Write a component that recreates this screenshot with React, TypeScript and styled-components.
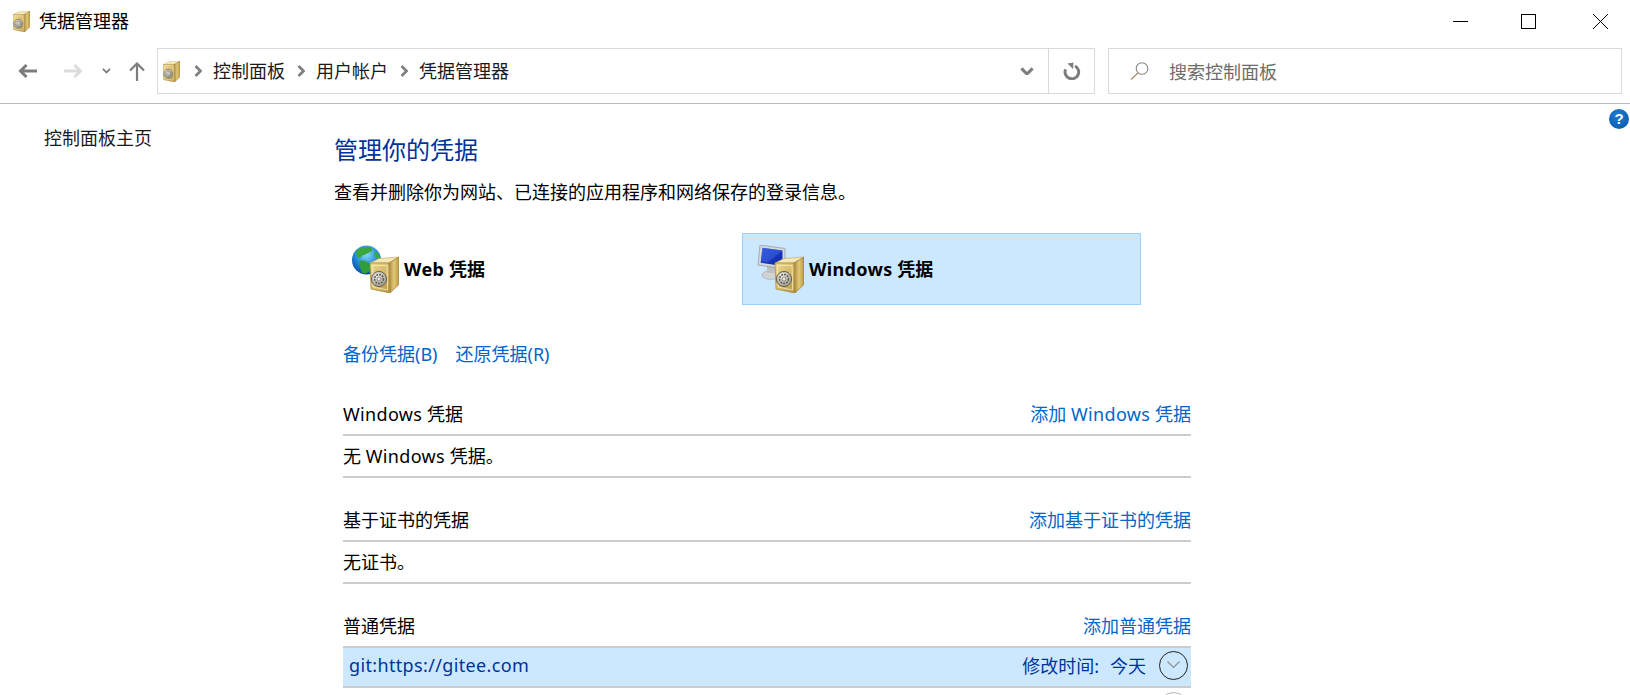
import styled, { createGlobalStyle } from "styled-components";

const GlobalStyle = createGlobalStyle`
  html, body {
    margin: 0;
    height: 695px;
    overflow: hidden;
    background: #fff;
  }
  body {
    font-family: "Noto Sans", "Noto Sans CJK SC", sans-serif;
    font-size: 18px;
    color: #000;
  }
`;

const Window = styled.div`
  width: 1630px;
  height: 695px;
  overflow: hidden;
  display: flex;
  flex-direction: column;
`;

const TitleBar = styled.header`
  height: 42px;
  flex: none;
  display: flex;
  align-items: center;
  gap: 9px;
  padding: 0 22px 0 13px;
`;

const TitleText = styled.span`
  flex: 1;
  line-height: 24px;
`;

const WindowControls = styled.div`
  display: flex;
  align-items: center;
  gap: 53px;
`;

const CloseSlot = styled.span`
  display: flex;
  margin-left: 4px;
`;

const Toolbar = styled.div`
  height: 62px;
  flex: none;
  box-sizing: border-box;
  display: flex;
  align-items: flex-start;
  padding: 6px 8px 0 18px;
  border-bottom: 1px solid #bcbcbc;
`;

const NavSlot = styled.span<{ $right: number }>`
  height: 46px;
  display: flex;
  align-items: center;
  margin-right: ${(p) => p.$right}px;
`;

const AddressBox = styled.div`
  width: 938px;
  height: 46px;
  box-sizing: border-box;
  flex: none;
  display: flex;
  align-items: center;
  border: 1px solid #d9d9d9;
  padding-left: 5px;
`;

const Crumbs = styled.div`
  flex: 1;
  display: flex;
  align-items: center;
  gap: 11px;
`;

const Crumb = styled.span`
  color: #1a1a1a;
  line-height: 24px;
  margin-right: 1px;
`;

const AddressHome = styled.span`
  display: flex;
  margin-right: 3px;
`;

const DropSlot = styled.span`
  display: flex;
  margin-right: 14px;
`;

const RefreshSlot = styled.span`
  width: 46px;
  height: 44px;
  box-sizing: border-box;
  border-left: 1px solid #d9d9d9;
  display: flex;
  align-items: center;
  justify-content: center;
`;

const SearchBox = styled.div`
  flex: none;
  width: 514px;
  height: 46px;
  box-sizing: border-box;
  margin-left: 13px;
  display: flex;
  align-items: center;
  gap: 20px;
  padding-left: 21px;
  border: 1px solid #d9d9d9;
  color: #6d6d6d;
`;

const Body = styled.div`
  flex: 1;
  display: flex;
  min-height: 0;
`;

const Sidebar = styled.nav`
  width: 334px;
  flex: none;
  box-sizing: border-box;
  padding: 22px 0 0 44px;
  line-height: 24px;
  color: #1a1a1a;
`;

const Main = styled.main`
  width: 857px;
  flex: none;
  padding-top: 30px;
`;

const HelpColumn = styled.aside`
  flex: 1;
  display: flex;
  justify-content: flex-end;
  align-items: flex-start;
  padding: 5px 1px 0 0;
`;

const HelpBadge = styled.span`
  width: 20px;
  height: 20px;
  border-radius: 50%;
  background: radial-gradient(circle at 40% 30%, #1f7ad2, #0557ac);
  box-sizing: border-box;
  color: #fff;
  font-family: "Liberation Sans", sans-serif;
  font-size: 15px;
  font-weight: 700;
  line-height: 20px;
  text-align: center;
`;

const Heading = styled.h1`
  margin: 0;
  font-size: 24px;
  font-weight: 400;
  line-height: 32px;
  color: #003399;
`;

const Description = styled.p`
  margin: 14px 0 0;
  line-height: 24px;
`;

const Tabs = styled.div`
  display: flex;
  gap: 6px;
  margin: 29px 0 0 3px;
`;

const Tab = styled.div<{ $active?: boolean }>`
  width: 399px;
  height: 72px;
  box-sizing: border-box;
  display: flex;
  align-items: center;
  gap: 5px;
  padding-left: 14px;
  font-weight: 700;
  border: 1px solid ${(p) => (p.$active ? "#99d1ff" : "transparent")};
  background: ${(p) => (p.$active ? "#cce8ff" : "transparent")};
`;

const TabLabel = styled.span`
  margin-bottom: 2px;
`;

const Links = styled.div`
  display: flex;
  gap: 18px;
  margin: 37px 0 27px 9px;
  line-height: 24px;
`;

const Link = styled.a`
  color: #0066cc;
`;

// Segoe UI runs a little wider than Noto Sans, so latin runs get some tracking
const Latin = styled.span`
  letter-spacing: 0.35px;
`;

const Section = styled.section`
  margin: 0 0 21px 9px;
`;

const SectionHeader = styled.div`
  height: 39px;
  padding-bottom: 2px;
  display: flex;
  align-items: center;
  justify-content: space-between;
  border-bottom: 2px solid #cccccc;
`;

const EmptyRow = styled.div`
  height: 38px;
  padding-bottom: 2px;
  display: flex;
  align-items: center;
  border-bottom: 2px solid #cccccc;
`;

const CredentialRow = styled.div<{ $selected?: boolean }>`
  height: 34px;
  display: flex;
  align-items: center;
  justify-content: space-between;
  padding: 0 3px 4px 6px;
  color: #003399;
  background: ${(p) => (p.$selected ? "#cce8ff" : "transparent")};
  border-bottom: 2px solid #cccccc;
`;

const NextRow = styled.div`
  display: flex;
  justify-content: flex-end;
  padding: 4px 3px 0 0;
`;

const RowMeta = styled.div`
  display: flex;
  align-items: center;
  gap: 13px;
`;

const ColonGap = styled.span`
  margin: 0 2px 0 9px;
`;

const ExpandCircle = styled.span<{ $dim?: boolean }>`
  width: 29px;
  height: 29px;
  box-sizing: border-box;
  border-radius: 50%;
  border: 1px solid ${(p) => (p.$dim ? "#b5b5b5" : "#222222")};
  display: flex;
  align-items: center;
  justify-content: center;
`;

function SafeArt() {
  return (
    <g>
      <defs>
        <linearGradient id="safeFront" x1="0" y1="0" x2="1" y2="1">
          <stop offset="0" stopColor="#ecd893" />
          <stop offset="0.6" stopColor="#d5b562" />
          <stop offset="1" stopColor="#b1903f" />
        </linearGradient>
        <linearGradient id="safeSide" x1="0" y1="0" x2="1" y2="0">
          <stop offset="0" stopColor="#a98a3c" />
          <stop offset="0.5" stopColor="#e3c877" />
          <stop offset="1" stopColor="#b8963f" />
        </linearGradient>
        <radialGradient id="safeDial" cx="0.4" cy="0.35" r="0.8">
          <stop offset="0" stopColor="#f0f0ea" />
          <stop offset="1" stopColor="#8b8778" />
        </radialGradient>
      </defs>
      <path d="M0 6 9 1.5 29 0 19 6Z" fill="#f4e8b8" stroke="#c3a654" strokeWidth=".6" />
      <path d="M19 6 29 0 28.5 28 20 36Z" fill="url(#safeSide)" stroke="#93732a" strokeWidth=".6" />
      <path d="M0 6H19L20 36 1 32Z" fill="url(#safeFront)" stroke="#a5862f" strokeWidth=".7" />
      <path d="M2.5 8.5H17L17.6 33 3 30Z" fill="none" stroke="#f7ecc0" strokeWidth=".8" />
      <circle cx="9" cy="22" r="7.6" fill="url(#safeDial)" stroke="#5c584c" strokeWidth=".9" />
      <circle cx="9" cy="22" r="4.4" fill="none" stroke="#5a574e" strokeWidth="1.5" strokeDasharray="1.8 1.1" />
      <circle cx="9" cy="22" r="2" fill="#e6e6e0" stroke="#5a574e" strokeWidth=".6" />
    </g>
  );
}

const SafeIcon = () => (
  <svg width="17" height="21" viewBox="0 0 29 36">
    <SafeArt />
  </svg>
);

const WebIcon = () => (
  <svg width="47" height="48" viewBox="0 0 47 48">
    <defs>
      <radialGradient id="globeSea" cx="0.5" cy="0.3" r="0.75">
        <stop offset="0" stopColor="#8adcf5" />
        <stop offset="0.55" stopColor="#1f86d8" />
        <stop offset="1" stopColor="#0a3f96" />
      </radialGradient>
    </defs>
    <circle cx="14.5" cy="15" r="14.5" fill="url(#globeSea)" />
    <path d="M5 5c4-3 9-4 13-3 3 1 3 3 0 5-3 1-4 3-7 3-2 1-2 3-4 3C5 12 3 8 5 5Z" fill="#38a83c" />
    <path d="M7 16c4-1 7 0 10 2 3 1 3 4 2 7-3 3-7 4-9 3-1-4-3-8-3-12Z" fill="#2f9e3a" />
    <path d="M23 6c3 2 5 5 6 8-3 0-5-1-7-4Z" fill="#39ab44" />
    <g transform="translate(18 12)">
      <SafeArt />
    </g>
  </svg>
);

const WindowsIcon = () => (
  <svg width="47" height="48" viewBox="0 0 47 48">
    <defs>
      <linearGradient id="screenBlue" x1="0" y1="0" x2="1" y2="1">
        <stop offset="0" stopColor="#2c55df" />
        <stop offset="1" stopColor="#0a1f9e" />
      </linearGradient>
    </defs>
    <ellipse cx="14" cy="30" rx="9" ry="4.4" fill="#d0d3d6" stroke="#a2a6aa" strokeWidth=".6" />
    <path d="M10 21h9v7h-9Z" fill="#bcc0c5" />
    <path d="M3 0 28 3.5V24L1 20Z" fill="#d5d9de" stroke="#8e949b" strokeWidth=".7" />
    <path d="M5.5 2.8 25.5 5.6V21L3.6 17.8Z" fill="url(#screenBlue)" />
    <path d="M5.5 2.8 25.5 5.6 11 17 4 16Z" fill="#4468e8" opacity=".45" />
    <g transform="translate(18 12)">
      <SafeArt />
    </g>
  </svg>
);

const ArrowIcon = ({ flip, color }: { flip?: boolean; color: string }) => (
  <svg
    width="19"
    height="14"
    viewBox="0 0 19 14"
    style={flip ? { transform: "scaleX(-1)" } : undefined}
    fill="none"
    stroke={color}
    strokeWidth="3"
  >
    <path d="M19 7H3M8.5 1 2.5 7l6 6" />
  </svg>
);

const UpIcon = () => (
  <svg width="16" height="19" viewBox="0 0 16 19" fill="none" stroke="#7d7d7d" strokeWidth="2.2">
    <path d="M8 19V2M1 8.5 8 1.5l7 7" />
  </svg>
);

const SmallChevron = ({
  size,
  color = "#7d7d7d",
  weight = 2,
}: {
  size: number;
  color?: string;
  weight?: number;
}) => (
  <svg width={size} height={size * 0.62} viewBox="0 0 10 6.2" fill="none" stroke={color} strokeWidth={weight}>
    <path d="M1 1 5 5 9 1" />
  </svg>
);

const CrumbChevron = () => (
  <svg width="8" height="12" viewBox="0 0 8 12" fill="none" stroke="#808080" strokeWidth="2.7">
    <path d="M1.5 1 6.5 6l-5 5" />
  </svg>
);

const RefreshIcon = () => (
  <svg width="18" height="18" viewBox="0 0 18 18" fill="none" stroke="#7d7d7d" strokeWidth="3">
    <path d="M12 4A6.8 6.8 0 1 1 2.6 7.4" />
    <path d="M4.5 1.6 10.5 .6 10 7Z" fill="#7d7d7d" stroke="none" />
  </svg>
);

const SearchIcon = () => (
  <svg width="19" height="18" viewBox="0 0 19 18" fill="none" stroke="#8a8a8a" strokeWidth="1.1">
    <circle cx="12" cy="6.5" r="5.8" />
    <path d="M8 11 1 17.5" stroke="#a88d6c" strokeWidth="1.3" />
  </svg>
);

const MinimizeIcon = () => (
  <svg width="15" height="15" viewBox="0 0 15 15" stroke="#000" strokeWidth="1">
    <path d="M0 7.5h15" />
  </svg>
);

const MaximizeIcon = () => (
  <svg width="15" height="15" viewBox="0 0 15 15" fill="none" stroke="#000" strokeWidth="1">
    <rect x=".5" y=".5" width="14" height="14" />
  </svg>
);

const CloseIcon = () => (
  <svg width="15" height="15" viewBox="0 0 15 15" stroke="#000" strokeWidth="1">
    <path d="M0 0 15 15M15 0 0 15" />
  </svg>
);

export default function App() {
  return (
    <Window>
      <GlobalStyle />
      <TitleBar>
        <SafeIcon />
        <TitleText>凭据管理器</TitleText>
        <WindowControls>
          <MinimizeIcon />
          <MaximizeIcon />
          <CloseSlot>
            <CloseIcon />
          </CloseSlot>
        </WindowControls>
      </TitleBar>
      <Toolbar>
        <NavSlot $right={27}>
          <ArrowIcon color="#7d7d7d" />
        </NavSlot>
        <NavSlot $right={19}>
          <ArrowIcon flip color="#dcdcdc" />
        </NavSlot>
        <NavSlot $right={18}>
          <SmallChevron size={9} />
        </NavSlot>
        <NavSlot $right={12}>
          <UpIcon />
        </NavSlot>
        <AddressBox>
          <Crumbs>
            <AddressHome>
              <SafeIcon />
            </AddressHome>
            <CrumbChevron />
            <Crumb>控制面板</Crumb>
            <CrumbChevron />
            <Crumb>用户帐户</Crumb>
            <CrumbChevron />
            <Crumb>凭据管理器</Crumb>
          </Crumbs>
          <DropSlot>
            <SmallChevron size={14} weight={2.2} />
          </DropSlot>
          <RefreshSlot>
            <RefreshIcon />
          </RefreshSlot>
        </AddressBox>
        <SearchBox>
          <SearchIcon />
          <span>搜索控制面板</span>
        </SearchBox>
      </Toolbar>
      <Body>
        <Sidebar>控制面板主页</Sidebar>
        <Main>
          <Heading>管理你的凭据</Heading>
          <Description>查看并删除你为网站、已连接的应用程序和网络保存的登录信息。</Description>
          <Tabs>
            <Tab>
              <WebIcon />
              <TabLabel>
                <Latin>Web</Latin> 凭据
              </TabLabel>
            </Tab>
            <Tab $active>
              <WindowsIcon />
              <TabLabel>
                <Latin>Windows</Latin> 凭据
              </TabLabel>
            </Tab>
          </Tabs>
          <Links>
            <Link>备份凭据(B)</Link>
            <Link>还原凭据(R)</Link>
          </Links>
          <Section>
            <SectionHeader>
              <span>
                <Latin>Windows</Latin> 凭据
              </span>
              <Link>
                添加 <Latin>Windows</Latin> 凭据
              </Link>
            </SectionHeader>
            <EmptyRow>
              <span>
                无 <Latin>Windows</Latin> 凭据。
              </span>
            </EmptyRow>
          </Section>
          <Section>
            <SectionHeader>
              <span>基于证书的凭据</span>
              <Link>添加基于证书的凭据</Link>
            </SectionHeader>
            <EmptyRow>无证书。</EmptyRow>
          </Section>
          <Section>
            <SectionHeader>
              <span>普通凭据</span>
              <Link>添加普通凭据</Link>
            </SectionHeader>
            <CredentialRow $selected>
              <Latin>git:https://gitee.com</Latin>
              <RowMeta>
                <span>
                  修改时间:<ColonGap />今天
                </span>
                <ExpandCircle>
                  <SmallChevron size={15} color="#8f8f8f" weight={0.8} />
                </ExpandCircle>
              </RowMeta>
            </CredentialRow>
            <NextRow>
              <ExpandCircle $dim />
            </NextRow>
          </Section>
        </Main>
        <HelpColumn>
          <HelpBadge>?</HelpBadge>
        </HelpColumn>
      </Body>
    </Window>
  );
}
